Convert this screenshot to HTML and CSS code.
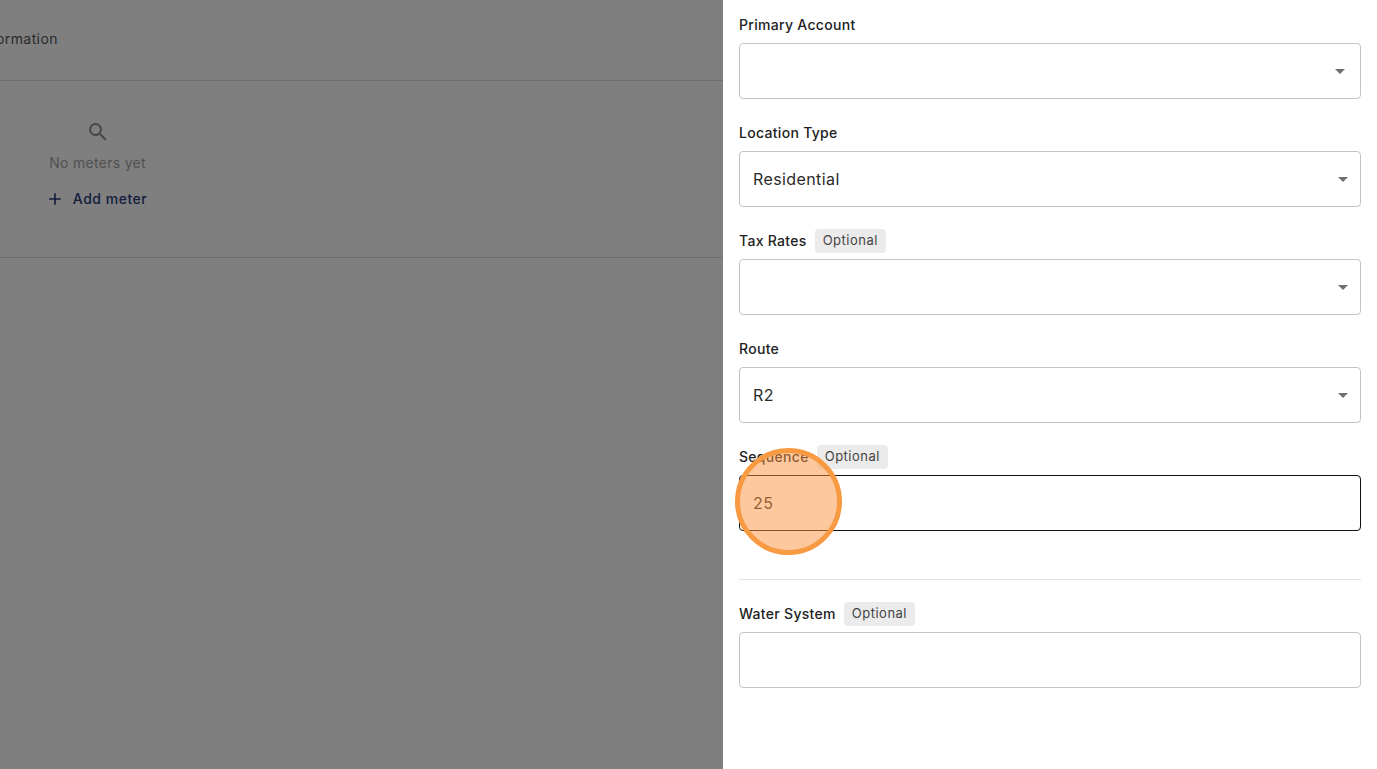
FILE: index.html
```html
<!DOCTYPE html>
<html lang="en">
<head>
<meta charset="utf-8">
<title>Edit location</title>
<link rel="stylesheet" href="styles.css">
</head>
<body>
<main class="page">
  <div class="tabs"><span class="tab-label">Meter Information</span></div>
  <section class="meters">
    <div class="empty">
      <svg class="search" viewBox="0 0 24 24" width="24" height="24"><path d="M15.5 14h-.79l-.28-.27A6.47 6.47 0 0 0 16 9.5 6.5 6.5 0 1 0 9.5 16c1.61 0 3.09-.59 4.23-1.57l.27.28v.79l5 4.99L20.49 19l-4.99-5zm-6 0C7.01 14 5 11.99 5 9.5S7.01 5 9.5 5 14 7.01 14 9.5 11.99 14 9.5 14z"/></svg>
      <p class="empty-text">No meters yet</p>
      <button class="add" type="button">
        <svg viewBox="0 0 24 24" width="20" height="20"><path d="M19 13h-6v6h-2v-6H5v-2h6V5h2v6h6v2z"/></svg>
        <span>Add meter</span>
      </button>
    </div>
  </section>
</main>
<div class="backdrop"></div>
<aside class="drawer">
  <div class="field">
    <div class="label-row"><label>Primary Account</label></div>
    <div class="control"><span class="value"></span><i class="caret caret-inset"></i></div>
  </div>
  <div class="field">
    <div class="label-row"><label>Location Type</label></div>
    <div class="control"><span class="value">Residential</span><i class="caret"></i></div>
  </div>
  <div class="field">
    <div class="label-row"><label>Tax Rates</label><span class="badge">Optional</span></div>
    <div class="control"><span class="value"></span><i class="caret"></i></div>
  </div>
  <div class="field">
    <div class="label-row"><label>Route</label></div>
    <div class="control"><span class="value">R2</span><i class="caret"></i></div>
  </div>
  <div class="field">
    <div class="label-row"><label>Sequence</label><span class="badge">Optional</span></div>
    <div class="control focused"><span class="value">25</span></div>
  </div>
  <hr class="divider">
  <div class="field">
    <div class="label-row"><label>Water System</label><span class="badge">Optional</span></div>
    <div class="control"><span class="value"></span></div>
  </div>
</aside>
<div class="spot"></div>
</body>
</html>
```
FILE: styles.css
```css
* { box-sizing: border-box; }
html, body { margin: 0; height: 100%; overflow: hidden; }
body {
  position: relative;
  width: 1377px;
  height: 769px;
  background: #fff;
  font-family: Inter, "Noto Sans", sans-serif;
  color: #1f1f1f;
}
.page { width: 723px; }
.tabs {
  height: 81px;
  border-bottom: 1px solid #ddd;
  padding-top: 28px;
  margin-left: -67px;
}
.tab-label { font-size: 14px; line-height: 22px; font-weight: 400; letter-spacing: .4px; color: #555; white-space: nowrap; }
.meters { height: 177px; border-bottom: 1px solid #ddd; padding-top: 39px; }
.empty { width: 195px; display: flex; flex-direction: column; align-items: center; }
.search { fill: #8c8c8c; display: block; }
.empty-text { margin: 9px 0 0; font-size: 14px; line-height: 20px; letter-spacing: .3px; color: #a3a3a3; }
.add {
  margin-top: 14px;
  display: flex; align-items: center; gap: 8px;
  border: 0; background: none; padding: 0;
  font: 500 14px/24px Inter, sans-serif;
  letter-spacing: .5px;
  color: #2a3a7a;
}
.add svg { fill: #2a3a7a; display: block; margin-left: -3px; }
.backdrop { position: absolute; left: 0; top: 0; width: 723px; height: 769px; background: rgba(0,0,0,.5); }
.drawer {
  position: absolute; left: 723px; top: 0; width: 654px; height: 769px;
  background: #fff; padding: 13px 16px 0;
}
.field { margin-bottom: 22px; }
.label-row { display: flex; align-items: center; gap: 8px; height: 24px; margin-bottom: 6px; }
label { font-size: 14px; font-weight: 500; letter-spacing: .3px; color: #222; line-height: 22px; margin-top: -1px; }
.badge {
  height: 24px; padding: 0 8px; border-radius: 4px; background: #ebebeb;
  font-size: 13px; line-height: 23px; letter-spacing: .5px; color: #444;
}
.control {
  height: 56px; border: 1px solid #c4c4c4; border-radius: 4px;
  display: flex; align-items: center; justify-content: space-between;
  padding: 0 13px;
}
.control.focused { border-color: #111; }
.value { font-size: 16px; letter-spacing: .4px; color: #2b2b2b; }
.caret {
  width: 0; height: 0; margin-right: -1px;
  border-left: 5px solid transparent; border-right: 5px solid transparent;
  border-top: 5px solid #6f6f6f;
}
.caret-inset { margin-right: 2px; }
.divider { border: 0; border-top: 1px solid #e3e3e3; margin: 48px 0 22px; }
.spot {
  position: absolute; left: 735px; top: 448px; width: 107px; height: 107px;
  border-radius: 50%; border: 5px solid #f79a42;
  background: rgba(251,146,60,.5);
}
```
